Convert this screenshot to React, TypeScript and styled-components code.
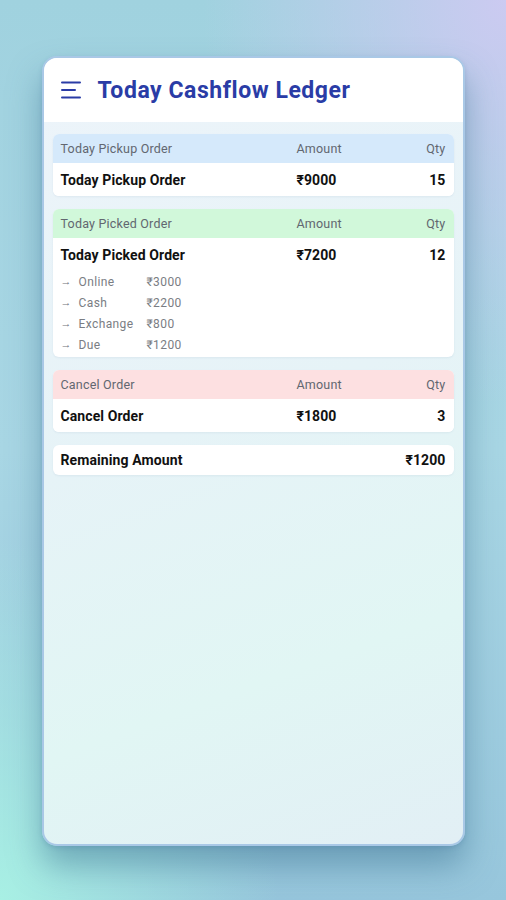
import styled, { createGlobalStyle } from 'styled-components'

const GlobalStyle = createGlobalStyle`
  * { box-sizing: border-box; }
  html, body {
    margin: 0;
    padding: 0;
  }
  body {
    font-family: Roboto, 'Liberation Sans', sans-serif;
    width: 506px;
    height: 900px;
    overflow: hidden;
  }
`

const Page = styled.div`
  width: 506px;
  height: 900px;
  padding-top: 56px;
  display: flex;
  justify-content: center;
  align-items: flex-start;
  background:
    radial-gradient(ellipse 60% 45% at 100% 0%, rgba(206, 202, 242, 0.95), rgba(206, 202, 242, 0) 100%),
    radial-gradient(ellipse 55% 40% at 0% 100%, rgba(168, 240, 228, 1), rgba(168, 240, 228, 0) 100%),
    linear-gradient(180deg, #a0d2df 0%, #a8d6e4 50%, #97c6dc 100%);
`

const Phone = styled.div`
  width: 423px;
  height: 790px;
  border-radius: 15px;
  border: 2px solid #a9c8e6;
  overflow: hidden;
  display: flex;
  flex-direction: column;
  background: linear-gradient(160deg, #edf4fa 0%, #e6f3f7 45%, #e1f6f4 75%, #e2eff5 100%);
  box-shadow: 0 20px 32px rgba(60, 115, 145, 0.5), 0 2px 4px rgba(80, 120, 170, 0.25);
`

const Header = styled.header`
  height: 64px;
  flex: none;
  background: #ffffff;
  display: flex;
  align-items: center;
  padding-left: 17px;
  gap: 17px;
`

const Title = styled.h1`
  margin: 0;
  font-size: 23px;
  font-weight: 700;
  color: #2a3ca6;
  letter-spacing: 0.55px;
`

const Content = styled.main`
  padding: 12px 9px 0 9px;
  display: flex;
  flex-direction: column;
  gap: 13px;
`

const Card = styled.section`
  background: #ffffff;
  border-radius: 6px;
  overflow: hidden;
  box-shadow: 0 1px 2px rgba(120, 150, 180, 0.12);
`

const Row = styled.div<{ $bg?: string; $head?: boolean }>`
  display: grid;
  grid-template-columns: 236px 1fr auto;
  align-items: center;
  height: ${(p) => (p.$head ? '29px' : '33px')};
  padding: 0 8px;
  background: ${(p) => p.$bg || '#ffffff'};
  font-size: ${(p) => (p.$head ? '12.5px' : '14px')};
  font-weight: ${(p) => (p.$head ? 400 : 700)};
  letter-spacing: ${(p) => (p.$head ? '0.2px' : '0.1px')};
  color: ${(p) => (p.$head ? '#626770' : '#111111')};
`

const Qty = styled.span`
  text-align: right;
`

const SubList = styled.div`
  padding: 0 8px 2px 8px;
  display: flex;
  flex-direction: column;
`

const SubItem = styled.div`
  display: grid;
  grid-template-columns: 18px 68px auto;
  align-items: center;
  height: 21px;
  font-size: 12px;
  letter-spacing: 0.4px;
  color: #7a7d83;
`

const Arrow = styled.span`
  font-size: 11px;
  color: #6e7178;
`

const TotalRow = styled.div`
  display: flex;
  justify-content: space-between;
  align-items: center;
  height: 30px;
  padding: 0 8px;
  font-size: 14px;
  font-weight: 700;
  letter-spacing: 0.1px;
  color: #111111;
`

const MenuIcon = () => (
  <svg width="20" height="18" viewBox="0 0 20 18" fill="none">
    <path d="M1 1.5h18M1 9h13M1 16.5h18" stroke="#2a3ca6" strokeWidth="2" strokeLinecap="round" />
  </svg>
)

const picked = [
  { label: 'Online', amount: '₹3000' },
  { label: 'Cash', amount: '₹2200' },
  { label: 'Exchange', amount: '₹800' },
  { label: 'Due', amount: '₹1200' },
]

export default function App() {
  return (
    <Page>
      <GlobalStyle />
      <Phone>
        <Header>
          <MenuIcon />
          <Title>Today Cashflow Ledger</Title>
        </Header>
        <Content>
          <Card>
            <Row $head $bg="#d5e9fb">
              <span>Today Pickup Order</span>
              <span>Amount</span>
              <Qty>Qty</Qty>
            </Row>
            <Row>
              <span>Today Pickup Order</span>
              <span>₹9000</span>
              <Qty>15</Qty>
            </Row>
          </Card>
          <Card>
            <Row $head $bg="#d1f8da">
              <span>Today Picked Order</span>
              <span>Amount</span>
              <Qty>Qty</Qty>
            </Row>
            <Row>
              <span>Today Picked Order</span>
              <span>₹7200</span>
              <Qty>12</Qty>
            </Row>
            <SubList>
              {picked.map((item) => (
                <SubItem key={item.label}>
                  <Arrow>→</Arrow>
                  <span>{item.label}</span>
                  <span>{item.amount}</span>
                </SubItem>
              ))}
            </SubList>
          </Card>
          <Card>
            <Row $head $bg="#fde0e1">
              <span>Cancel Order</span>
              <span>Amount</span>
              <Qty>Qty</Qty>
            </Row>
            <Row>
              <span>Cancel Order</span>
              <span>₹1800</span>
              <Qty>3</Qty>
            </Row>
          </Card>
          <Card>
            <TotalRow>
              <span>Remaining Amount</span>
              <span>₹1200</span>
            </TotalRow>
          </Card>
        </Content>
      </Phone>
    </Page>
  )
}
